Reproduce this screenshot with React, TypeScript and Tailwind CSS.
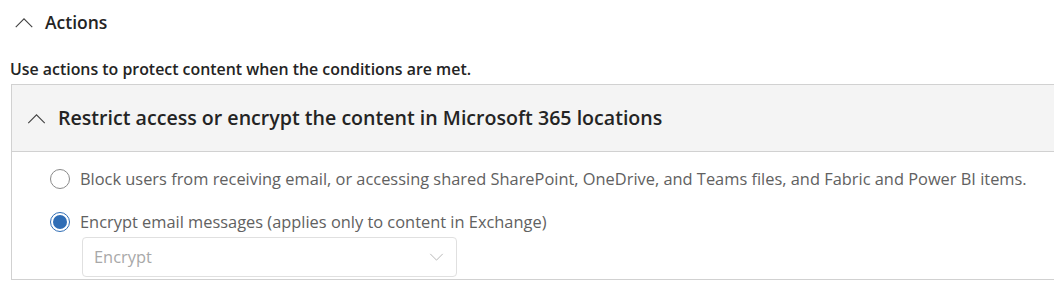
const font = { fontFamily: '"Segoe UI", "Open Sans", "Liberation Sans", sans-serif' };

function Chevron({ className }: { className?: string }) {
  return (
    <svg className={className} viewBox="0 0 20 12" fill="none" stroke="currentColor" strokeWidth="1.2">
      <path d="M1 11 L10 2 L19 11" />
    </svg>
  );
}

function Radio({ checked, label }: { checked?: boolean; label: string }) {
  return (
    <label className="flex h-[20px] items-center gap-[10px]">
      <span
        className={
          checked
            ? "flex h-[20px] w-[20px] shrink-0 items-center justify-center rounded-full border border-[#2f6db5]"
            : "flex h-[20px] w-[20px] shrink-0 items-center justify-center rounded-full border border-[#8a8a8a]"
        }
      >
        {checked && <span className="h-[14px] w-[14px] rounded-full bg-[#2f6db5]" />}
      </span>
      <span className="whitespace-nowrap text-[16.4px] leading-[20px] text-[#616161]">{label}</span>
    </label>
  );
}

export default function App() {
  return (
    <div className="h-[285px] w-[1054px] overflow-hidden bg-white text-[#242424]" style={font}>
      <div className="flex h-[44px] items-center gap-[11px] pl-[14px]">
        <Chevron className="h-[11px] w-[20px] text-[#424242]" />
        <span className="text-[17.5px] font-semibold leading-[22px]">Actions</span>
      </div>
      <p className="mt-[15px] pl-[10px] text-[15.9px] font-semibold leading-[20px]">
        Use actions to protect content when the conditions are met.
      </p>
      <div className="ml-[11px] mt-[5px] h-[196px] overflow-hidden border-y border-l border-[#d1d1d1]">
        <div className="flex h-[67px] items-center gap-[11px] border-b border-[#d1d1d1] bg-[#f4f4f4] pl-[14px]">
          <Chevron className="h-[11px] w-[21px] text-[#424242]" />
          <span className="whitespace-nowrap text-[19.6px] font-semibold leading-[26px]">
            Restrict access or encrypt the content in Microsoft 365 locations
          </span>
        </div>
        <div className="flex flex-col pl-[38px] pt-[17px]">
          <Radio label="Block users from receiving email, or accessing shared SharePoint, OneDrive, and Teams files, and Fabric and Power BI items." />
          <div className="mt-[23px]">
            <Radio checked label="Encrypt email messages (applies only to content in Exchange)" />
          </div>
          <div className="ml-[32px] mt-[5px] flex h-[40px] w-[375px] items-center justify-between rounded-[4px] border border-[#e0e0e0] pl-[11px] pr-[12px]">
            <span className="text-[16.4px] leading-[20px] text-[#a8a8a8]">Encrypt</span>
            <svg className="h-[8px] w-[15px] text-[#b0b0b0]" viewBox="0 0 16 9" fill="none" stroke="currentColor" strokeWidth="1">
              <path d="M1 1 L8 8 L15 1" />
            </svg>
          </div>
        </div>
      </div>
    </div>
  );
}
